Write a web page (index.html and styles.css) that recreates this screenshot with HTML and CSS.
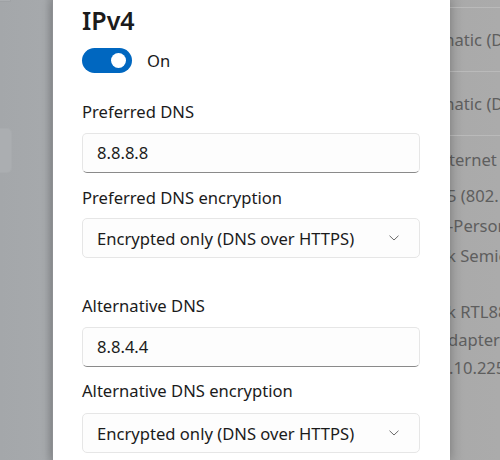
FILE: index.html
```html
<!DOCTYPE html>
<html>
<head>
<meta charset="utf-8">
<link rel="stylesheet" href="styles.css">
</head>
<body>
<div class="screen">
  <div class="left-strip">
    <div class="ghost-card top-card"></div>
    <div class="ghost-card mid-card"></div>
  </div>

  <div class="dialog">
    <h1 class="title">IPv4</h1>
    <div class="toggle-row">
      <span class="toggle"><span class="knob"></span></span>
      <span class="toggle-label">On</span>
    </div>

    <div class="label l-pref">Preferred DNS</div>
    <div class="textbox">8.8.8.8</div>
    <div class="label l-enc">Preferred DNS encryption</div>
    <div class="dropdown">
      <span>Encrypted only (DNS over HTTPS)</span>
      <svg class="chev" width="12" height="8" viewBox="0 0 12 8"><path d="M1.8 2 L6 6 L10.2 2" fill="none" stroke="#6a6a6a" stroke-width="1" stroke-linecap="round" stroke-linejoin="round"/></svg>
    </div>

    <div class="label l-alt">Alternative DNS</div>
    <div class="textbox">8.8.4.4</div>
    <div class="label l-altenc">Alternative DNS encryption</div>
    <div class="dropdown d-alt">
      <span>Encrypted only (DNS over HTTPS)</span>
      <svg class="chev" width="12" height="8" viewBox="0 0 12 8"><path d="M1.8 2 L6 6 L10.2 2" fill="none" stroke="#6a6a6a" stroke-width="1" stroke-linecap="round" stroke-linejoin="round"/></svg>
    </div>
  </div>

  <div class="right-strip">
    <div class="row r-top"></div>
    <div class="row r-item"><span class="val c-m">matic (DHCP)</span></div>
    <div class="row r-item"><span class="val c-m">matic (DHCP)</span></div>
    <div class="list">
      <div class="val c-1 g-a">ternet</div>
      <div class="val c-3 g-b">5 (802.11ac)</div>
      <div class="val c-2">-Personal</div>
      <div class="val c-3">k Semiconductor</div>
      <div class="val c-3 g-c tight">k RTL8821CE</div>
      <div class="val c-2 tight">dapter</div>
      <div class="val c-1 tight">.10.225</div>
    </div>
  </div>
</div>
</body>
</html>
```

FILE: styles.css
```css
* { box-sizing: border-box; }
html, body { margin: 0; padding: 0; }
body {
  width: 500px;
  height: 460px;
  overflow: hidden;
  font-family: "Noto Sans", "Open Sans", sans-serif;
  color: #1a1a1a;
  background: #a6a9ac;
}
.screen {
  display: grid;
  grid-template-columns: 52px 398px 50px;
  height: 460px;
}

/* left background */
.left-strip {
  background: linear-gradient(90deg, #a4a7aa 0%, #a6a9ac 85%, #9a9da0 100%);
  display: flex;
  flex-direction: column;
}
.ghost-card {
  width: 12px;
  background: #abaeb1;
  border: 1px solid #9fa2a5;
  border-left: none;
  border-radius: 0 5px 5px 0;
}
.top-card { height: 3px; width: 11px; margin-top: -1px; }
.mid-card { height: 45px; margin-top: 126px; border-color: #a8abae; }

/* dialog */
.dialog {
  position: relative;
  z-index: 1;
  background: #ffffff;
  border-left: 1px solid #8e9093;
  box-shadow: 0 0 10px rgba(0, 0, 0, 0.25);
  padding: 5px 30px 0 29px;
  display: flex;
  flex-direction: column;
}
.title {
  margin: 0;
  font-size: 25px;
  line-height: 30px;
  font-weight: 600;
  color: #1b1b1b;
}
.toggle-row {
  display: flex;
  align-items: center;
  gap: 15px;
  margin-top: 13px;
  height: 25px;
}
.toggle {
  width: 50px;
  height: 25px;
  border-radius: 13px;
  background: #0067c0;
  display: flex;
  align-items: center;
  justify-content: flex-end;
  padding-right: 6px;
}
.knob {
  width: 15px;
  height: 15px;
  border-radius: 50%;
  background: #ffffff;
}
.toggle-label {
  font-size: 16.6px;
  line-height: 24px;
}
.label {
  font-size: 16.6px;
  line-height: 24px;
  color: #1b1b1b;
}
.l-pref { margin-top: 27px; }
.l-enc { margin-top: 13px; }
.l-alt { margin-top: 36px; }
.l-altenc { margin-top: 12px; }

.textbox {
  margin-top: 9px;
  height: 40px;
  border: 1px solid #e6e6e6;
  border-bottom: 1px solid #8a8a8a;
  border-radius: 5px;
  background: #fdfdfd;
  padding-left: 14px;
  font-size: 16.6px;
  line-height: 37px;
  color: #1b1b1b;
}
.dropdown {
  margin-top: 8px;
  height: 40px;
  border: 1px solid #e6e6e6;
  border-radius: 5px;
  background: #fdfdfd;
  padding: 0 19px 0 14px;
  display: flex;
  align-items: center;
  justify-content: space-between;
  font-size: 16.6px;
  color: #1b1b1b;
}
.d-alt { margin-top: 10px; }
.chev { display: block; }

/* right background */
.right-strip {
  background: linear-gradient(90deg, #a3a3a3 0%, #aaaaaa 30%, #ababab 100%);
  overflow: hidden;
  display: flex;
  flex-direction: column;
  color: #5e5e5e;
  font-size: 16.6px;
  white-space: nowrap;
}
.row {
  border-bottom: 1px solid #bababa;
  display: flex;
  align-items: center;
}
.r-top { height: 8px; }
.r-item { height: 64px; }
.list { display: flex; flex-direction: column; }
.val { line-height: 30px; display: block; }
.tight { line-height: 28px; }
.g-a { margin-top: 9px; }
.g-b { margin-top: 6px; }
.g-c { margin-top: 27px; }
.c-m { margin-left: -11px; }
.c-1 { margin-left: -1px; }
.c-2 { margin-left: -2px; }
.c-3 { margin-left: -3px; }
```
